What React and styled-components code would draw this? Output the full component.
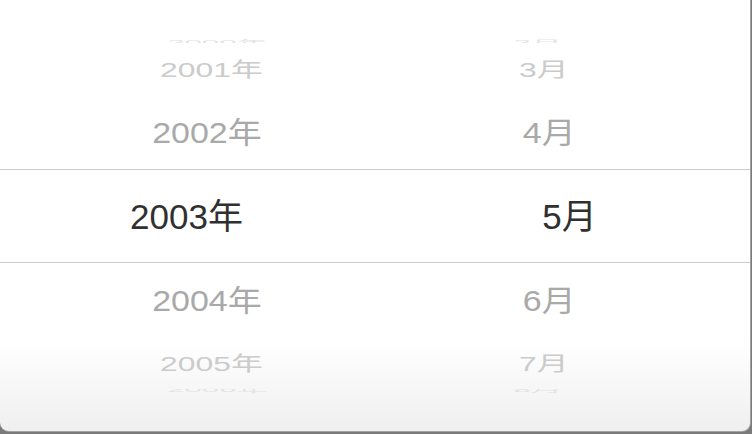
import React from "react";
import styled, { createGlobalStyle } from "styled-components";

const Global = createGlobalStyle`
  html, body {
    margin: 0;
    padding: 0;
    background: #7a7a7a;
  }
  body {
    font-family: "Liberation Sans", "Noto Sans CJK SC", Arial, sans-serif;
  }
`;

const Panel = styled.div`
  width: 750px;
  height: 431px;
  background: linear-gradient(
    to bottom,
    #ffffff 0px,
    #ffffff 342px,
    #efefef 431px
  );
  border-right: 1px solid #a3a3a3;
  border-bottom: 1px solid #a3a3a3;
  border-radius: 0 0 9px 9px;
  display: flex;
  flex-direction: column;
  overflow: hidden;
`;

const WheelHalf = styled.div`
  height: ${(p) => p.$h}px;
  display: flex;
  flex-direction: row;
  flex: none;
`;

const WheelColumn = styled.div`
  flex: 1;
  display: flex;
  flex-direction: column;
  justify-content: ${(p) => (p.$top ? "flex-end" : "flex-start")};
`;

const Slot = styled.div`
  height: ${(p) => p.$h}px;
  flex: none;
  display: flex;
  align-items: center;
  justify-content: center;
  overflow: ${(p) => (p.$clip ? "hidden" : "visible")};
`;

const Label = styled.span`
  display: block;
  font-size: 35px;
  line-height: 1;
  white-space: nowrap;
  color: ${(p) => p.$color};
  transform: translate(${(p) => p.$dx}px, ${(p) => p.$dy}px)
    scale(${(p) => p.$sx}, ${(p) => p.$sy});
  transform-origin: center center;
`;

const Band = styled.div`
  height: 92px;
  flex: none;
  border-top: 1px solid #cacaca;
  border-bottom: 1px solid #cacaca;
  display: flex;
  flex-direction: row;
  align-items: center;
`;

const BandCell = styled.div`
  flex: 1;
  display: flex;
  justify-content: center;
`;

const Selected = styled.span`
  display: block;
  font-size: 35px;
  line-height: 1;
  color: #303030;
  white-space: nowrap;
  transform: translateX(${(p) => p.$dx}px);
`;

const LEVELS = {
  1: { h: 74, sy: 0.86, sx: 0.97, color: "#a9a9a9" },
  2: { h: 52, sy: 0.58, sx: 0.91, color: "#cbcbcb" },
  3: { h: 5, sy: 0.2, sx: 0.89, color: "#e3e3e3", clip: true },
};

const YEAR_DX = { 1: 19.5, 2: 24, 3: 30 };
const MONTH_DX = { 1: -13, 2: -18.5, 3: -24.5 };

const columns = [
  {
    key: "year",
    up: ["2000年", "2001年", "2002年"],
    sel: "2003年",
    down: ["2004年", "2005年", "2006年"],
    dx: YEAR_DX,
    selDx: -1,
  },
  {
    key: "month",
    up: ["2月", "3月", "4月"],
    sel: "5月",
    down: ["6月", "7月", "8月"],
    dx: MONTH_DX,
    selDx: 7,
  },
];

function Item({ text, level, dx, top }) {
  const l = LEVELS[level];
  const dy = l.clip ? (top ? 2 : -2) : 0;
  return (
    <Slot $h={l.h} $clip={l.clip}>
      <Label $color={l.color} $sx={l.sx} $sy={l.sy} $dx={dx} $dy={dy}>
        {text}
      </Label>
    </Slot>
  );
}

export default function App() {
  return (
    <>
      <Global />
      <Panel>
        <WheelHalf $h={169}>
          {columns.map((c) => (
            <WheelColumn key={c.key} $top>
              {c.up.map((t, i) => {
                const level = 3 - i;
                return (
                  <Item key={t} text={t} level={level} dx={c.dx[level]} top />
                );
              })}
            </WheelColumn>
          ))}
        </WheelHalf>
        <Band>
          {columns.map((c) => (
            <BandCell key={c.key}>
              <Selected $dx={c.selDx}>{c.sel}</Selected>
            </BandCell>
          ))}
        </Band>
        <WheelHalf $h={168}>
          {columns.map((c) => (
            <WheelColumn key={c.key}>
              {c.down.map((t, i) => {
                const level = i + 1;
                return <Item key={t} text={t} level={level} dx={c.dx[level]} />;
              })}
            </WheelColumn>
          ))}
        </WheelHalf>
      </Panel>
    </>
  );
}
